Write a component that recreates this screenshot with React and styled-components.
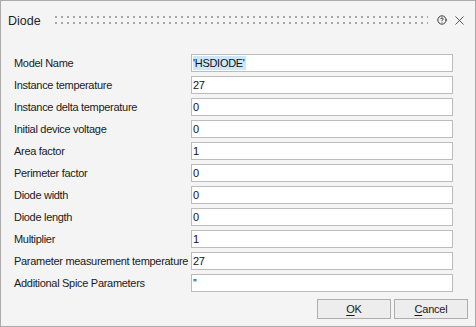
import React from "react";
import styled, { createGlobalStyle } from "styled-components";
import { CircleHelp, X } from "lucide-react";

const Global = createGlobalStyle`
  html, body { margin: 0; padding: 0; background: #f4f4f4; }
  body { font-family: "Liberation Sans", Arial, sans-serif; }
  * { box-sizing: border-box; }
`;

const Window = styled.div`
  width: 476px;
  height: 327px;
  border: 1px solid #ababab;
  background: #f4f4f4;
  display: flex;
  flex-direction: column;
  color: #1a1a1a;
`;

const TitleBar = styled.div`
  height: 38px;
  display: flex;
  align-items: center;
  padding-left: 7px;
  padding-right: 8px;
`;

const Title = styled.div`
  font-size: 12.5px;
  width: 47px;
  color: #1e1e1e;
  padding-top: 1px;
`;

const Grip = styled.svg`
  flex: 1;
  height: 8px;
  display: block;
  margin-top: 0px;
`;

const TitleIcons = styled.div`
  display: flex;
  align-items: center;
  gap: 5px;
  margin-left: 9px;
  color: #333;
  svg { display: block; }
`;

const Form = styled.div`
  display: grid;
  grid-template-columns: 177px 262px;
  grid-auto-rows: 18px;
  row-gap: 4px;
  padding-left: 13px;
  margin-top: 15px;
`;

const Label = styled.div`
  font-size: 11px;
  letter-spacing: -0.3px;
  display: flex;
  align-items: center;
  color: #1a1a1a;
  white-space: nowrap;
`;

const Field = styled.div`
  border: 1px solid #bcbcbc;
  background: #fff;
  font-size: 11px;
  letter-spacing: -0.3px;
  display: flex;
  align-items: center;
  padding-left: 1px;
  color: #111;
`;

const Selected = styled.span`
  background: #cce8ff;
  padding: 1px 1px 1px 0;
`;

const Buttons = styled.div`
  display: flex;
  justify-content: flex-end;
  gap: 3px;
  margin-top: 7px;
  padding-right: 7px;
`;

const Button = styled.button`
  width: 74px;
  height: 20px;
  border: 1px solid #adadad;
  background: #ededed;
  font-family: "Liberation Sans", Arial, sans-serif;
  font-size: 11px;
  letter-spacing: -0.2px;
  color: #1a1a1a;
  padding: 0;
  u { text-decoration: underline; text-underline-offset: 2px; }
`;

const rows = [
  ["Model Name", "'HSDIODE'", true],
  ["Instance temperature", "27"],
  ["Instance delta temperature", "0"],
  ["Initial device voltage", "0"],
  ["Area factor", "1"],
  ["Perimeter factor", "0"],
  ["Diode width", "0"],
  ["Diode length", "0"],
  ["Multiplier", "1"],
  ["Parameter measurement temperature", "27"],
  ["Additional Spice Parameters", "''"],
];

export default function App() {
  return (
    <>
      <Global />
      <Window>
        <TitleBar>
          <Title>Diode</Title>
          <Grip>
            <defs>
              <pattern id="dots" width="6" height="6" patternUnits="userSpaceOnUse">
                <rect x="0" y="0" width="2" height="2" fill="#a6a6a6" />
              </pattern>
            </defs>
            <rect x="0" y="0" width="100%" height="8" fill="url(#dots)" />
          </Grip>
          <TitleIcons>
            <CircleHelp size={10} strokeWidth={2.4} />
            <X size={15} strokeWidth={1.3} />
          </TitleIcons>
        </TitleBar>
        <Form>
          {rows.map(([label, value, sel]) => (
            <React.Fragment key={label}>
              <Label>{label}</Label>
              <Field>{sel ? <Selected>{value}</Selected> : value}</Field>
            </React.Fragment>
          ))}
        </Form>
        <Buttons>
          <Button><u>O</u>K</Button>
          <Button><u>C</u>ancel</Button>
        </Buttons>
      </Window>
    </>
  );
}
